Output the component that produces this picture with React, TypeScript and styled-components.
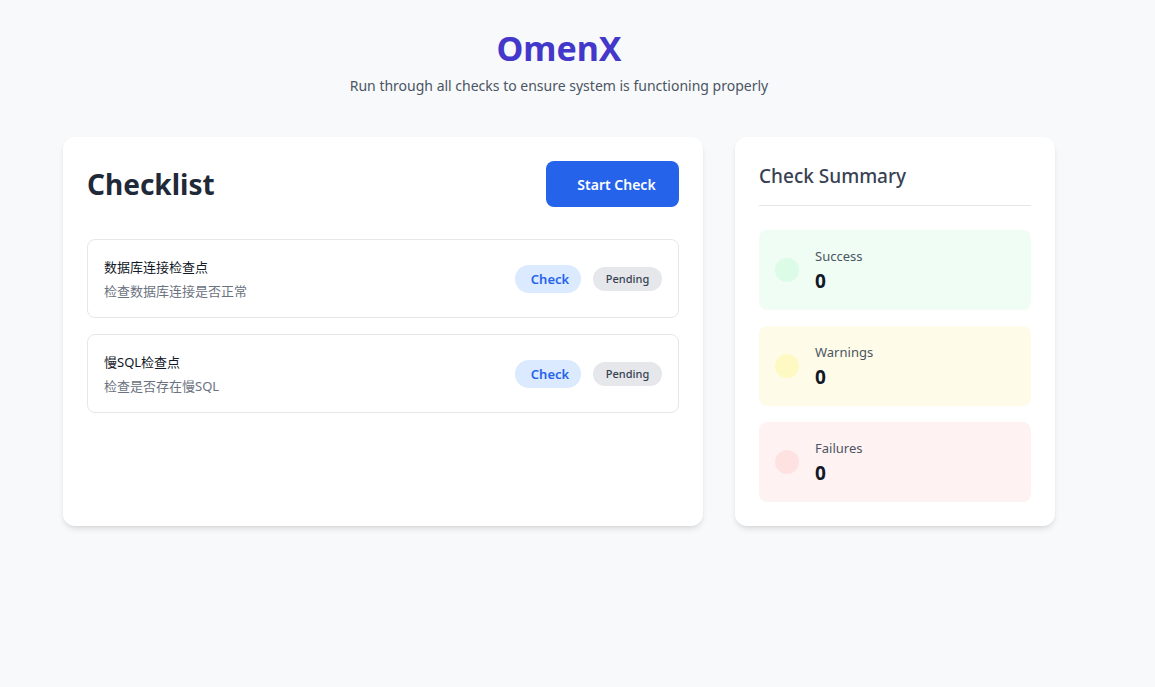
import React, { ReactElement } from 'react'
import styled, { createGlobalStyle } from 'styled-components'

type Tone = 'success' | 'warning' | 'failure'

const checks = [
  { title: '数据库连接检查点', desc: '检查数据库连接是否正常' },
  { title: '慢SQL检查点', desc: '检查是否存在慢SQL' },
]

const summary: { tone: Tone; label: string; value: number }[] = [
  { tone: 'success', label: 'Success', value: 0 },
  { tone: 'warning', label: 'Warnings', value: 0 },
  { tone: 'failure', label: 'Failures', value: 0 },
]

const tones: Record<Tone, { bg: string; dot: string }> = {
  success: { bg: '#f0fdf4', dot: '#dcfce7' },
  warning: { bg: '#fefce8', dot: '#fef9c3' },
  failure: { bg: '#fef2f2', dot: '#fee2e2' },
}

const App: React.FC = (): ReactElement => {
  return (
    <>
      <GlobalStyle />
      <Page>
        <Header>
          <h1>OmenX</h1>
          <p>Run through all checks to ensure system is functioning properly</p>
        </Header>
        <Grid>
          <Card>
            <CardTop>
              <h2>Checklist</h2>
              <StartButton>Start Check</StartButton>
            </CardTop>
            <List>
              {checks.map((c) => (
                <Item key={c.title}>
                  <ItemText>
                    <ItemTitle>{c.title}</ItemTitle>
                    <ItemDesc>{c.desc}</ItemDesc>
                  </ItemText>
                  <ItemActions>
                    <CheckButton>Check</CheckButton>
                    <Badge>Pending</Badge>
                  </ItemActions>
                </Item>
              ))}
            </List>
          </Card>
          <Card>
            <SummaryTitle>Check Summary</SummaryTitle>
            <Tiles>
              {summary.map((s) => (
                <Tile key={s.label} $tone={s.tone}>
                  <Dot $tone={s.tone} />
                  <div>
                    <TileLabel>{s.label}</TileLabel>
                    <TileValue>{s.value}</TileValue>
                  </div>
                </Tile>
              ))}
            </Tiles>
          </Card>
        </Grid>
      </Page>
    </>
  )
}

const GlobalStyle = createGlobalStyle`
  body {
    margin: 0;
    background: #f8f9fb;
    font-family: 'Noto Sans', 'Noto Sans CJK SC', sans-serif;
    color: #1f2937;
  }
`

const Page = styled.div`
  width: 1118px;
  padding: 28px 0 40px;
`

const Header = styled.header`
  text-align: center;
  margin-bottom: 41px;

  h1 {
    margin: 0;
    font-size: 34px;
    line-height: 40px;
    font-weight: 700;
    color: #4338ca;
  }

  p {
    margin: 8px 0 0;
    font-size: 14px;
    line-height: 20px;
    color: #4b5563;
  }
`

const Grid = styled.div`
  width: 992px;
  margin: 0 auto;
  display: grid;
  grid-template-columns: 640px 320px;
  gap: 32px;
`

const Card = styled.section`
  background: #fff;
  border-radius: 12px;
  padding: 24px;
  box-shadow: 0 4px 6px -1px rgba(0, 0, 0, 0.1), 0 2px 4px -2px rgba(0, 0, 0, 0.08);
`

const CardTop = styled.div`
  display: flex;
  justify-content: space-between;
  align-items: center;
  margin-bottom: 32px;

  h2 {
    margin: 0;
    font-size: 28px;
    font-weight: 700;
    color: #1f2937;
  }
`

const StartButton = styled.button`
  width: 133px;
  height: 46px;
  padding: 0 0 0 8px;
  border: none;
  border-radius: 8px;
  background: #2563eb;
  color: #fff;
  font-family: inherit;
  font-size: 14px;
  font-weight: 600;
`

const List = styled.div`
  display: flex;
  flex-direction: column;
  gap: 16px;
`

const Item = styled.div`
  display: flex;
  align-items: center;
  justify-content: space-between;
  height: 79px;
  box-sizing: border-box;
  padding: 0 16px;
  border: 1px solid #e5e7eb;
  border-radius: 8px;
`

const ItemText = styled.div`
  display: flex;
  flex-direction: column;
  gap: 4px;
`

const ItemTitle = styled.div`
  font-size: 13px;
  line-height: 20px;
  color: #111827;
`

const ItemDesc = styled.div`
  font-size: 13px;
  line-height: 20px;
  color: #6b7280;
`

const ItemActions = styled.div`
  display: flex;
  align-items: center;
  gap: 12px;
`

const CheckButton = styled.button`
  width: 66px;
  height: 28px;
  padding: 0 0 0 4px;
  border: none;
  border-radius: 999px;
  background: #dbeafe;
  color: #2563eb;
  font-family: inherit;
  font-size: 13px;
  font-weight: 600;
`

const Badge = styled.span`
  display: inline-flex;
  align-items: center;
  justify-content: center;
  width: 69px;
  height: 24px;
  border-radius: 999px;
  background: #e5e7eb;
  color: #374151;
  font-size: 11px;
  font-weight: 500;
`

const SummaryTitle = styled.h3`
  margin: 0 0 24px;
  padding: 1px 0 15px;
  border-bottom: 1px solid #e5e7eb;
  font-size: 19px;
  line-height: 28px;
  font-weight: 500;
  color: #374151;
`

const Tiles = styled.div`
  display: flex;
  flex-direction: column;
  gap: 16px;
`

const Tile = styled.div<{ $tone: Tone }>`
  display: flex;
  align-items: center;
  gap: 16px;
  height: 80px;
  box-sizing: border-box;
  padding: 0 16px;
  border-radius: 8px;
  background: ${(p) => tones[p.$tone].bg};
`

const Dot = styled.span<{ $tone: Tone }>`
  width: 24px;
  height: 24px;
  border-radius: 50%;
  background: ${(p) => tones[p.$tone].dot};
`

const TileLabel = styled.div`
  font-size: 13px;
  line-height: 20px;
  color: #4b5563;
`

const TileValue = styled.div`
  margin-top: 2px;
  font-size: 19px;
  line-height: 26px;
  font-weight: 700;
  color: #111827;
`

export default App
